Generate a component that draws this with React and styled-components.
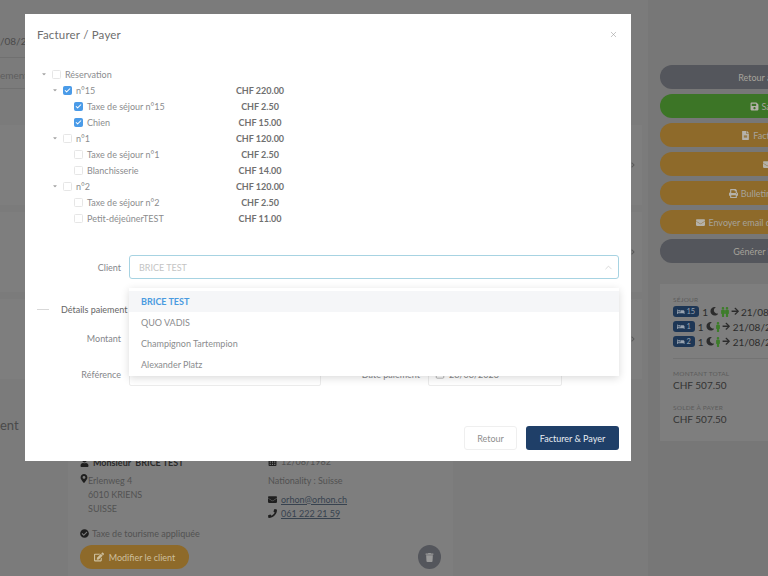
import React from 'react'
import styled, { createGlobalStyle } from 'styled-components'
import {
  FaBed, FaMoon, FaMale, FaArrowRight, FaSave, FaFileAlt, FaEnvelope, FaPrint, FaUser,
  FaMapMarkerAlt, FaCalendarAlt, FaPhone, FaCheckCircle, FaEdit, FaTrash, FaCaretDown, FaChevronRight,
} from 'react-icons/fa'
import { Calendar, ChevronUp, X, Check } from 'lucide-react'

const tree = [
  { level: 0, label: 'Réservation', caret: true },
  { level: 1, label: 'n°15', caret: true, checked: true, amount: 'CHF 220.00' },
  { level: 2, label: 'Taxe de séjour n°15', checked: true, amount: 'CHF 2.50' },
  { level: 2, label: 'Chien', checked: true, amount: 'CHF 15.00' },
  { level: 1, label: 'n°1', caret: true, amount: 'CHF 120.00' },
  { level: 2, label: 'Taxe de séjour n°1', amount: 'CHF 2.50' },
  { level: 2, label: 'Blanchisserie', amount: 'CHF 14.00' },
  { level: 1, label: 'n°2', caret: true, amount: 'CHF 120.00' },
  { level: 2, label: 'Taxe de séjour n°2', amount: 'CHF 2.50' },
  { level: 2, label: 'Petit-déjeûnerTEST', amount: 'CHF 11.00' },
]

const clients = ['BRICE TEST', 'QUO VADIS', 'Champignon Tartempion', 'Alexander Platz']

const stays = [
  { room: '15', people: 2 },
  { room: '1', people: 1 },
  { room: '2', people: 1 },
]

function App() {
  return (
    <Page>
      <GlobalStyle />
      <Main>
        <TopStrip>
          <TopLine>/08/2</TopLine>
          <TopLine>ement</TopLine>
        </TopStrip>
        <Panel><FaChevronRight /></Panel>
        <Panel><FaChevronRight /></Panel>
        <Panel><FaChevronRight /></Panel>
        <SectionTitle>ent</SectionTitle>
        <ClientCard>
          <ClientCol>
            <ClientName><FaUser /> Monsieur&nbsp; BRICE TEST</ClientName>
            <Address>
              <FaMapMarkerAlt />
              <div>
                <div>Erlenweg 4</div>
                <div>6010 KRIENS</div>
                <div>SUISSE</div>
              </div>
            </Address>
            <Tourism><FaCheckCircle /> Taxe de tourisme appliquée</Tourism>
          </ClientCol>
          <ClientCol>
            <InfoLine><FaCalendarAlt /> 12/08/1982</InfoLine>
            <InfoLine $gap>Nationality : Suisse</InfoLine>
            <InfoLine $gap><FaEnvelope /> <u>orhon@orhon.ch</u></InfoLine>
            <InfoLine><FaPhone /> <u>061 222 21 59</u></InfoLine>
          </ClientCol>
          <ClientActions>
            <EditButton><FaEdit /> Modifier le client</EditButton>
            <TrashButton><FaTrash /></TrashButton>
          </ClientActions>
        </ClientCard>
      </Main>

      <Sidebar>
        <Pill $color="#54565c">Retour à la recherche</Pill>
        <Pill $color="#3c7526"><FaSave /> Sauvegarder</Pill>
        <Pill $color="#8e6a2a"><FaFileAlt /> Facturer &amp; Payer</Pill>
        <Pill $color="#8e6a2a"><FaEnvelope /> Email</Pill>
        <Pill $color="#8e6a2a"><FaPrint />Bulletin d'arrivée client</Pill>
        <Pill $color="#8e6a2a"><FaEnvelope /> Envoyer email de confirmation au client</Pill>
        <Pill $color="#54565c">Générer la confirmation</Pill>
        <Summary>
          <SmallLabel>SÉJOUR</SmallLabel>
          {stays.map((s) => (
            <StayRow key={s.room}>
              <RoomBadge><FaBed /> {s.room}</RoomBadge>
              1 <FaMoon />
              <People>{Array.from({ length: s.people }, (_, i) => <FaMale key={i} />)}</People>
              <FaArrowRight /> 21/08/2023
            </StayRow>
          ))}
          <SummaryRule />
          <SmallLabel>MONTANT TOTAL</SmallLabel>
          <Total>CHF 507.50</Total>
          <SmallLabel $top>SOLDE À PAYER</SmallLabel>
          <Total>CHF 507.50</Total>
        </Summary>
      </Sidebar>

      <Modal>
        <ModalHeader>
          <ModalTitle>Facturer / Payer</ModalTitle>
          <CloseButton><X size={9} strokeWidth={1.5} /></CloseButton>
        </ModalHeader>
        <Tree>
          {tree.map((row) => (
            <TreeRow key={row.label}>
              <TreeLabel $level={row.level}>
                <Caret>{row.caret && <FaCaretDown />}</Caret>
                <Box $checked={row.checked}>{row.checked && <Check size={7} strokeWidth={3.5} />}</Box>
                {row.label}
              </TreeLabel>
              <Amount>{row.amount}</Amount>
            </TreeRow>
          ))}
        </Tree>
        <ClientRow>
          <FieldLabel>Client</FieldLabel>
          <Select>
            BRICE TEST
            <ChevronUp size={11} strokeWidth={1.5} />
          </Select>
          <Dropdown>
            {clients.map((c, i) => <Option key={c} $active={i === 0}>{c}</Option>)}
          </Dropdown>
        </ClientRow>
        <DividerRow><Dash /><span>Détails paiement</span></DividerRow>
        <FormRow>
          <FieldLabel>Montant</FieldLabel>
          <Input $width={192} />
          <FieldLabel $width={91}>Mode</FieldLabel>
          <Input $width={134} />
        </FormRow>
        <FormRow>
          <FieldLabel>Référence</FieldLabel>
          <Input $width={192} />
          <FieldLabel $width={91}>Date paiement</FieldLabel>
          <Input $width={134}><Calendar size={10} strokeWidth={1.5} /> 28/08/2023</Input>
        </FormRow>
        <ModalFooter>
          <GhostButton>Retour</GhostButton>
          <PrimaryButton>Facturer &amp; Payer</PrimaryButton>
        </ModalFooter>
      </Modal>
    </Page>
  )
}

const GlobalStyle = createGlobalStyle`
body {
  margin: 0;
  font-family: Lato, "Open Sans", sans-serif;
}
`

const Page = styled.div`
position: relative;
display: flex;
width: 768px;
height: 576px;
overflow: hidden;
background: #777;
color: #3a3a3a;
`

const Main = styled.div`
flex: none;
width: 648px;
background: #7b7b7b;
`

const TopStrip = styled.div`
height: 125px;
padding-top: 29px;
box-sizing: border-box;
`

const TopLine = styled.div`
height: 28px;
width: 25px;
overflow: hidden;
border-bottom: 1px solid #707070;
font-size: 10px;
line-height: 24px;
color: #4a4a4a;
white-space: nowrap;
&:last-child { height: 30px; line-height: 34px; color: #5e5e5e; }
`

const Panel = styled.div`
display: flex;
align-items: center;
justify-content: flex-end;
width: 642px;
height: 80px;
margin-bottom: 7px;
padding-right: 6px;
box-sizing: border-box;
background: #7e7e7e;
color: #5a5a5a;
font-size: 6px;
`

const SectionTitle = styled.div`
height: 36px;
padding-top: 9px;
margin-top: 29px;
box-sizing: border-box;
font-size: 13px;
line-height: 16px;
color: #4a4a4a;
`

const ClientCard = styled.div`
display: grid;
grid-template-columns: 188px 1fr;
align-content: start;
margin-left: 68px;
width: 385px;
height: 160px;
padding: 10px 12px 5px;
box-sizing: border-box;
background: #7e7e7e;
color: #525252;
font-size: 9px;
svg { flex: none; color: #1f1f1f; }
`

const ClientCol = styled.div`
display: flex;
flex-direction: column;
`

const ClientName = styled.div`
display: flex;
align-items: center;
gap: 4px;
height: 16px;
font-weight: 700;
color: #2a2a2a;
`

const Address = styled.div`
display: flex;
margin-top: 4px;
line-height: 14px;
svg { width: 8px; }
`

const Tourism = styled.div`
display: flex;
align-items: center;
gap: 3px;
margin-top: 10px;
height: 14px;
`

const InfoLine = styled.div`
display: flex;
align-items: center;
gap: 4px;
height: 14px;
margin-top: ${({ $gap }) => ($gap ? '5px' : '0')};
u { color: #37424f; }
`

const ClientActions = styled.div`
grid-column: 1 / -1;
display: flex;
align-items: center;
justify-content: space-between;
margin-top: 5px;
`

const EditButton = styled.div`
display: flex;
align-items: center;
justify-content: center;
gap: 5px;
width: 109px;
height: 24px;
border-radius: 12px;
background: #8e6a2a;
color: #cdbf9d;
font-size: 9px;
svg { color: #cdbf9d; font-size: 10px; }
`

const TrashButton = styled.div`
display: flex;
align-items: center;
justify-content: center;
width: 23px;
height: 24px;
border-radius: 50%;
background: #54565c;
svg { color: #999; font-size: 9px; }
`

const Sidebar = styled.div`
flex: none;
display: flex;
flex-direction: column;
gap: 5px;
width: 240px;
margin-left: 12px;
padding-top: 65px;
`

const Pill = styled.div`
display: flex;
align-items: center;
justify-content: center;
gap: 3px;
flex: none;
height: 24px;
border-radius: 12px;
background: ${({ $color }) => $color};
color: #a6a39b;
font-size: 9px;
white-space: nowrap;
svg { flex: none; color: #b5b2aa; }
`

const Summary = styled.div`
margin-top: 16px;
height: 157px;
padding: 12px 13px;
box-sizing: border-box;
background: #7e7e7e;
color: #2c2c2c;
`

const SmallLabel = styled.div`
font-size: 6.5px;
line-height: 8px;
letter-spacing: 0.2px;
color: #5c5c5c;
margin-top: ${({ $top }) => ($top ? '11px' : '0')};
`

const StayRow = styled.div`
display: flex;
align-items: center;
gap: 2px;
height: 15px;
font-size: 10px;
white-space: nowrap;
> svg { font-size: 8.5px; }
`

const RoomBadge = styled.span`
display: inline-flex;
align-items: center;
gap: 2px;
height: 11px;
padding: 0 4px;
margin-right: 1px;
border-radius: 3px;
background: #1d3655;
color: #98a3b0;
font-size: 7.5px;
`

const People = styled.span`
display: inline-flex;
color: #3d7d2a;
font-size: 10px;
svg { margin: 0 -3px; }
`

const SummaryRule = styled.div`
height: 1px;
margin: 9px 0 11px;
background: #737373;
`

const Total = styled.div`
font-size: 10px;
line-height: 15px;
color: #333;
`

const Modal = styled.div`
position: absolute;
left: 25px;
top: 14px;
display: flex;
flex-direction: column;
width: 606px;
height: 447px;
padding: 0 12px 11px;
box-sizing: border-box;
background: #fff;
color: #8b8c8e;
font-size: 9px;
`

const ModalHeader = styled.div`
display: flex;
align-items: center;
justify-content: space-between;
height: 40px;
flex: none;
`

const ModalTitle = styled.div`
font-size: 11.5px;
letter-spacing: 0.2px;
color: #6e6e6e;
`

const CloseButton = styled.div`
display: flex;
margin-right: 1px;
color: #9a9a9a;
`

const Tree = styled.div`
margin: 12px 0 29px 3px;
`

const TreeRow = styled.div`
display: grid;
grid-template-columns: 170px 100px;
height: 16px;
align-items: center;
`

const TreeLabel = styled.div`
display: flex;
align-items: center;
padding-left: ${({ $level }) => $level * 11}px;
white-space: nowrap;
`

const Caret = styled.span`
display: flex;
justify-content: center;
width: 8px;
margin-right: 4px;
font-size: 6px;
color: #a5a5a5;
`

const Box = styled.span`
display: flex;
align-items: center;
justify-content: center;
flex: none;
box-sizing: border-box;
width: 9px;
height: 9px;
margin-right: 4px;
border-radius: 1.5px;
border: 1px solid ${({ $checked }) => ($checked ? '#4a9be8' : '#e6e6e6')};
background: ${({ $checked }) => ($checked ? '#4a9be8' : '#fff')};
color: #fff;
`

const Amount = styled.div`
text-align: center;
font-weight: 700;
color: #707070;
`

const ClientRow = styled.div`
position: relative;
display: flex;
gap: 8px;
align-items: center;
`

const FieldLabel = styled.div`
flex: none;
width: ${({ $width }) => $width || 84}px;
text-align: right;
color: #85868a;
white-space: nowrap;
`

const Select = styled.div`
display: flex;
align-items: center;
justify-content: space-between;
box-sizing: border-box;
width: 490px;
height: 24px;
padding: 0 4px 0 9px;
border: 1px solid #a7d3e2;
border-radius: 3px;
color: #c4c4c4;
svg { color: #c9c9c9; }
`

const Dropdown = styled.div`
position: absolute;
left: 92px;
top: 33px;
z-index: 2;
box-sizing: border-box;
width: 490px;
height: 88px;
padding: 3px 0;
background: #fff;
box-shadow: 0 2px 8px rgba(0, 0, 0, 0.15);
`

const Option = styled.div`
height: 21px;
padding-left: 12px;
line-height: 21px;
background: ${({ $active }) => ($active ? '#f5f6f8' : 'transparent')};
color: ${({ $active }) => ($active ? '#4a9be0' : '#8b8c8e')};
font-weight: ${({ $active }) => ($active ? 700 : 400)};
`

const DividerRow = styled.div`
display: flex;
align-items: center;
gap: 12px;
height: 16px;
margin-top: 22px;
color: #666;
white-space: nowrap;
`

const Dash = styled.div`
width: 12px;
height: 1px;
background: #d8d8d8;
`

const FormRow = styled.div`
display: flex;
align-items: center;
gap: 8px;
margin-top: 9px;
& + & { margin-top: 12px; }
`

const Input = styled.div`
display: flex;
align-items: center;
gap: 4px;
box-sizing: border-box;
width: ${({ $width }) => $width}px;
height: 24px;
padding: 0 6px;
border: 1px solid #ececec;
border-radius: 2px;
color: #8a8a8a;
`

const ModalFooter = styled.div`
display: flex;
justify-content: flex-end;
gap: 9px;
margin-top: auto;
`

const GhostButton = styled.div`
display: flex;
align-items: center;
justify-content: center;
width: 53px;
height: 24px;
box-sizing: border-box;
border: 1px solid #efefef;
border-radius: 3px;
color: #8f8f8f;
`

const PrimaryButton = styled.div`
display: flex;
align-items: center;
justify-content: center;
width: 93px;
height: 24px;
border-radius: 3px;
background: #1f3f68;
color: #e8edf3;
`

export default App
